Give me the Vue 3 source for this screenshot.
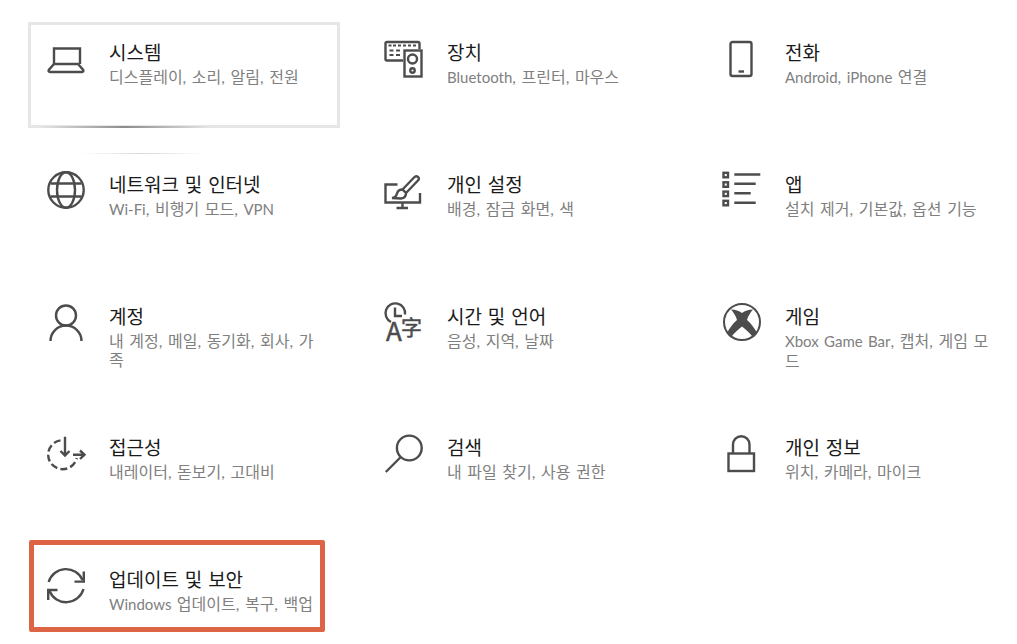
<template>
  <div class="page">
    <div class="grid">
      <div v-for="item in items" :key="item.title" class="tile" :class="{ active: item.active }">
        <svg class="icon" viewBox="0 0 38 38" width="38" height="38" v-html="item.icon"></svg>
        <div class="text">
          <div class="title">{{ item.title }}</div>
          <div class="sub">
            <span v-for="(part, i) in splitLatin(item.sub)" :key="i" :class="{ latin: part.latin }">{{ part.text }}</span>
          </div>
        </div>
      </div>
    </div>
    <div class="reveal-top"></div>
    <div class="callout"></div>
  </div>
</template>

<script setup>
const items = [
  {
    title: '시스템',
    sub: '디스플레이, 소리, 알림, 전원',
    active: true,
    icon: '<path d="M7 25V9.5H33V25" /><path d="M7 25L1.8 31Q1 33 3 33H35Q37 33 36.2 31L31 25Z" />'
  },
  {
    title: '장치',
    sub: 'Bluetooth, 프린터, 마우스',
    icon: '<path d="M18 21.5H2Q0.5 21.5 0.5 20V4.5Q0.5 3 2 3H33Q34.5 3 34.5 4.5V10" /><rect x="19.5" y="11.5" width="17" height="26" /><circle cx="27.5" cy="20" r="4.5" /><circle cx="27.5" cy="31.5" r="2.2" /><path class="thin" d="M3.5 6.5h3M8 6.5h3M13 6.5h3M18 6.5h3M23 6.5h3M28 6.5h3M4.5 11.5h4M11 11.5h4M4.5 16h4M11 16h4" />'
  },
  {
    title: '전화',
    sub: 'Android, iPhone 연결',
    icon: '<rect x="7.5" y="3" width="21" height="34" rx="2" /><path d="M15.5 32.5h5.5" />'
  },
  {
    title: '네트워크 및 인터넷',
    sub: 'Wi-Fi, 비행기 모드, VPN',
    icon: '<circle cx="19" cy="19" r="17.7" /><ellipse cx="19" cy="19" rx="9" ry="17.7" /><path d="M3.5 12.5H34.5M3.5 25.5H34.5" />'
  },
  {
    title: '개인 설정',
    sub: '배경, 잠금 화면, 색',
    icon: '<path d="M12.5 13.5H0.5V31.5H35V22" /><path d="M17.5 31.5V36M11.5 37H23" /><path d="M17.5 18.5L29 6.5Q31 4.5 33 6T32.5 10L21 22" /><path d="M7 27Q11 26.5 12 22.5T17.5 18.5L21 22Q21 27 16 27.5Z" />'
  },
  {
    title: '앱',
    sub: '설치 제거, 기본값, 옵션 기능',
    icon: '<rect x="0.5" y="1.8" width="4.5" height="4.5" /><rect x="0.5" y="11.3" width="4.5" height="4.5" /><rect x="0.5" y="20.6" width="4.5" height="4.5" /><rect x="0.5" y="29.8" width="4.5" height="4.5" /><path d="M11.3 3.5H37.3M11.3 12.8H32.7M11.3 22.3H27.7M11.3 31.8H32.7" />'
  },
  {
    title: '계정',
    sub: '내 계정, 메일, 동기화, 회사, 가족',
    icon: '<circle cx="19" cy="12.5" r="10" /><path d="M3.5 38A15.5 15.5 0 0 1 34.5 38" />'
  },
  {
    title: '시간 및 언어',
    sub: '음성, 지역, 날짜',
    icon: '<path d="M6 19A9.8 9.8 0 1 1 20 11.5" /><path d="M10 4.5V13H17" /><text class="glyph" x="1" y="38" font-size="26">A</text><text class="glyph" x="16" y="32" font-size="21">字</text>'
  },
  {
    title: '게임',
    sub: 'Xbox Game Bar, 캡처, 게임 모드',
    icon: '<circle cx="19" cy="19" r="18" class="thin" /><path class="fill" d="M8 6.5C12.5 6.5 16 8 19 10C22 8 25.5 6.5 30 6.5C27.5 9.5 25 13 24 17C28.5 21 32 25.5 34 30.5C33 32 31.5 33.5 30 34.5C27.5 30.5 23 26.5 19 23.5C15 26.5 10.5 30.5 8 34.5C6.5 33.5 5 32 4 30.5C6 25.5 9.5 21 14 17C13 13 10.5 9.5 8 6.5Z" />'
  },
  {
    title: '접근성',
    sub: '내레이터, 돋보기, 고대비',
    icon: '<path d="M13.5 6.4A14.5 14.5 0 1 0 29.8 24" stroke-dasharray="7 3.2" /><path d="M18 2.7V21M13.5 17L18 21.5L22.5 17" /><path d="M26 20.7H37M33 16.5L37.5 20.7L33 25" />'
  },
  {
    title: '검색',
    sub: '내 파일 찾기, 사용 권한',
    icon: '<circle cx="24.3" cy="14" r="12.4" /><path d="M15.3 23.5L0.8 38" />'
  },
  {
    title: '개인 정보',
    sub: '위치, 카메라, 마이크',
    icon: '<rect x="5.5" y="19.5" width="25.5" height="17.5" /><path d="M10 19.5V10.5A8.2 8.2 0 0 1 26.5 10.5V19.5" />'
  },
  {
    title: '업데이트 및 보안',
    sub: 'Windows 업데이트, 복구, 백업',
    icon: '<path d="M1.7 16A18 18 0 0 1 35.5 14" /><path d="M36.8 5.5V15.6H27.5" /><path d="M36.5 23A18 18 0 0 1 2.5 25" /><path d="M1.2 34V24H10.5" />'
  }
]

// latin runs are set a bit smaller than the hangul around them
function splitLatin(text) {
  return text
    .split(/([A-Za-z][A-Za-z -]*)/)
    .filter(Boolean)
    .map((part) => ({ text: part, latin: /^[A-Za-z]/.test(part) }))
}
</script>

<style scoped>
.page {
  position: relative;
  width: 1017px;
  height: 644px;
  overflow: hidden;
  background: #fff;
  font-family: Lato, "Noto Sans CJK KR", sans-serif;
}

.grid {
  display: grid;
  grid-template-columns: repeat(3, 312px);
  grid-auto-rows: 105.75px;
  column-gap: 26px;
  row-gap: 26px;
  padding: 22px 0 0 28px;
}

.tile {
  display: flex;
  gap: 24px;
  padding: 17px 16px 0 19px;
  box-sizing: border-box;
  position: relative;
}

.tile.active {
  padding: 14px 13px 0 16px;
  border: 3px solid #e6e6e6;
}

.tile.active::after {
  content: "";
  position: absolute;
  left: 9px;
  bottom: -3px;
  width: 170px;
  height: 2px;
  background: linear-gradient(90deg, rgba(130, 130, 130, 0), rgba(130, 130, 130, 0.9) 50%, rgba(130, 130, 130, 0));
}

.icon {
  flex: none;
  overflow: visible;
  fill: none;
  stroke: #4c4c4c;
  stroke-width: 2.4;
}

.icon :deep(.thin) {
  stroke-width: 2;
}

.icon :deep(.fill) {
  fill: #4c4c4c;
  stroke: none;
}

.icon :deep(.glyph) {
  fill: #4c4c4c;
  stroke: #4c4c4c;
  stroke-width: 0.5;
  font-family: "Noto Sans CJK SC", "Noto Sans", sans-serif;
}

.text {
  min-width: 0;
  flex: 1;
}

.title {
  font-size: 19px;
  line-height: 27px;
  word-spacing: 1px;
  color: #1a1a1a;
}

.sub {
  font-size: 16px;
  line-height: 19px;
  word-spacing: 1.5px;
  margin-top: 1px;
  color: #808080;
}

.latin {
  font-size: 15px;
}

.reveal-top {
  position: absolute;
  left: 80px;
  top: 153px;
  width: 125px;
  height: 1px;
  background: linear-gradient(90deg, rgba(200, 200, 200, 0), #d8d8d8 50%, rgba(200, 200, 200, 0));
}

.callout {
  position: absolute;
  left: 29px;
  top: 540px;
  width: 296px;
  height: 92px;
  box-sizing: border-box;
  border: 5px solid #dd6546;
  border-radius: 2px;
}
</style>

<style>
html, body {
  margin: 0;
  overflow: hidden;
}
</style>
